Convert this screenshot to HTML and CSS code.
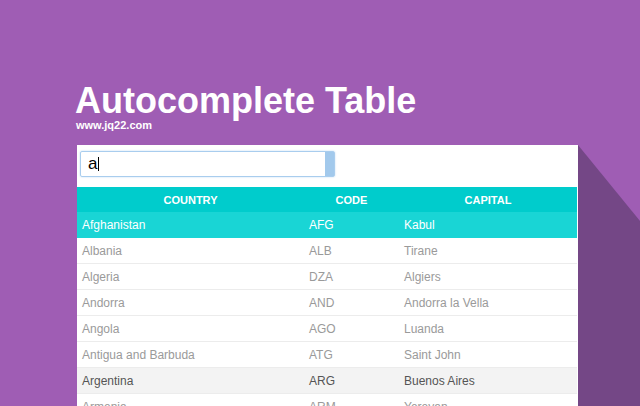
FILE: index.html
```html
<!DOCTYPE html>
<html>
<head>
<meta charset="utf-8">
<link rel="stylesheet" href="styles.css">
</head>
<body>
<div class="page">
  <h1 class="title">Autocomplete Table</h1>
  <div class="subtitle">www.jq22.com</div>
  <div class="panel">
    <div class="search">
      <div class="search-field"><span class="search-text">a</span><span class="caret"></span></div>
      <div class="search-bar"></div>
    </div>
    <table class="grid">
      <colgroup><col class="c1"><col class="c2"><col class="c3"></colgroup>
      <thead>
        <tr><th>COUNTRY</th><th>CODE</th><th>CAPITAL</th></tr>
      </thead>
      <tbody>
        <tr class="active"><td>Afghanistan</td><td>AFG</td><td>Kabul</td></tr>
        <tr><td>Albania</td><td>ALB</td><td>Tirane</td></tr>
        <tr><td>Algeria</td><td>DZA</td><td>Algiers</td></tr>
        <tr><td>Andorra</td><td>AND</td><td>Andorra la Vella</td></tr>
        <tr><td>Angola</td><td>AGO</td><td>Luanda</td></tr>
        <tr><td>Antigua and Barbuda</td><td>ATG</td><td>Saint John</td></tr>
        <tr class="hover"><td>Argentina</td><td>ARG</td><td>Buenos Aires</td></tr>
        <tr><td>Armenia</td><td>ARM</td><td>Yerevan</td></tr>
      </tbody>
    </table>
  </div>
</div>
</body>
</html>
```
FILE: styles.css
```css
html, body {
  margin: 0;
  padding: 0;
  height: 100%;
  overflow: hidden;
}
body {
  background: #9f5db4;
  font-family: "Liberation Sans", Arial, sans-serif;
}
.page {
  padding: 83px 0 0 77px;
}
.title {
  margin: 0 0 0 -2px;
  font-size: 36px;
  line-height: 36px;
  font-weight: bold;
  color: #fff;
}
.subtitle {
  margin-left: -1px;
  font-size: 11px;
  line-height: 12px;
  font-weight: bold;
  color: #fff;
}
.panel {
  position: relative;
  margin-top: 14px;
  width: 500px;
  padding: 6px 1px 0 0;
  background: #fff;
}
.panel::before {
  content: "";
  position: absolute;
  left: 100%;
  top: 0;
  width: 62px;
  height: 261px;
  background: #744786;
  clip-path: polygon(0 0, 62px 76px, 62px 261px, 0 261px);
}
.search {
  display: flex;
  margin-left: 3px;
  width: 253px;
  height: 24px;
  border: 1px solid #a9cdee;
  border-radius: 2px;
  box-shadow: 0 0 2px #b9d8f2;
}
.search-field {
  flex: 1;
  display: flex;
  align-items: center;
  padding-left: 7px;
}
.search-text {
  font-size: 17px;
  color: #000;
}
.caret {
  display: inline-block;
  width: 1px;
  height: 14px;
  margin-left: 1px;
  background: #000;
}
.search-bar {
  width: 9px;
  background: #a2c9ec;
}
.grid {
  margin-top: 10px;
  width: 500px;
  border-collapse: collapse;
  table-layout: fixed;
  font-size: 12px;
}
.c1 { width: 227px; }
.c2 { width: 95px; }
.c3 { width: 178px; }
.grid th {
  background: #00cccc;
  color: #fff;
  font-size: 11px;
  font-weight: bold;
  height: 25px;
  padding: 0;
  text-align: center;
}
.grid td {
  height: 25px;
  padding: 0 5px;
  color: #9a9a9a;
  border-bottom: 1px solid #ececec;
  white-space: nowrap;
}
.grid tr.active td {
  background: #19d5d5;
  color: #fff;
  border-bottom-color: #19d5d5;
}
.grid tr.hover td {
  background: #f3f3f3;
  color: #555;
}
```
